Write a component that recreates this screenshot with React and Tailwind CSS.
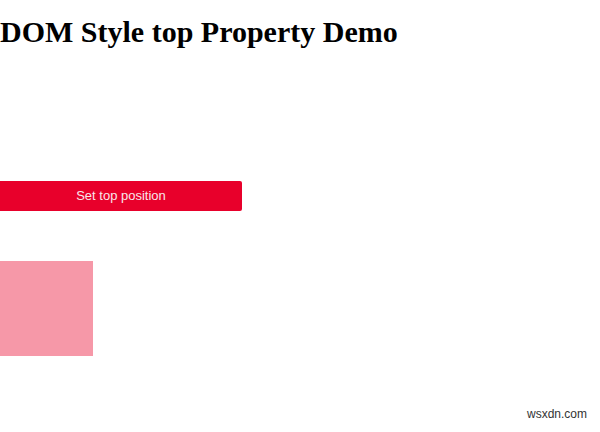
export default function App() {
  return (
    <div className="w-[600px] h-[432px] bg-white relative overflow-hidden">
      <div className="pt-[15px]">
        <h1 className="text-[30px] font-bold leading-[33px] text-black whitespace-nowrap" style={{ fontFamily: '"Liberation Serif", serif' }}>
          DOM Style top Property Demo
        </h1>
      </div>
      <button className="mt-[133px] block w-[242px] h-[30px] bg-[#e8002b] rounded-r-[2px] text-[#f8e6ea] text-[13px]" style={{ fontFamily: '"Liberation Sans", sans-serif' }}>
        Set top position
      </button>
      <div className="mt-[50px] w-[93px] h-[95px] bg-[#f698a8]"></div>
      <div className="absolute left-[527px] top-[405px] text-[12px] text-[#333]" style={{ fontFamily: '"Liberation Sans", sans-serif' }}>
        wsxdn.com
      </div>
    </div>
  );
}
